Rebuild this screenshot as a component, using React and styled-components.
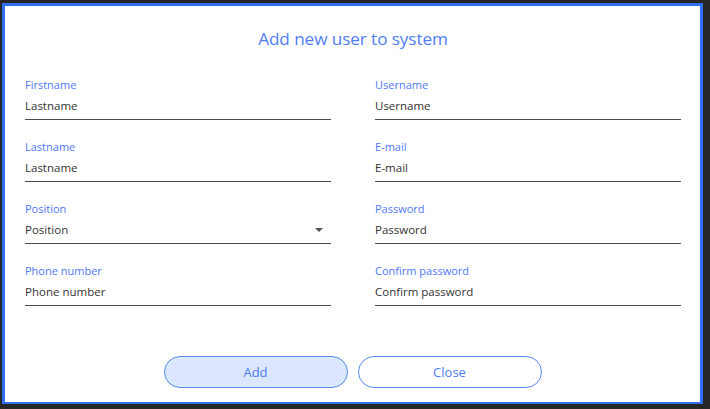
import React from "react";
import styled, { createGlobalStyle } from "styled-components";

const Global = createGlobalStyle`
  html, body { margin: 0; padding: 0; background: #262626; }
  body { width: 710px; height: 409px; overflow: hidden; font-family: "Open Sans", "Noto Sans", sans-serif; }
  * { box-sizing: border-box; }
`;

const Frame = styled.div`
  padding: 3px 7px 5px 2px;
  width: 710px;
  height: 409px;
`;

const Dialog = styled.div`
  width: 701px;
  height: 401px;
  background: #fff;
  border: 3px solid #2f6ff0;
  border-bottom-width: 2px;
  display: flex;
  flex-direction: column;
  padding: 0 19px 0 20px;
`;

const Title = styled.h1`
  margin: 0;
  padding-top: 21px;
  height: 72px;
  text-align: center;
  font-weight: 400;
  font-size: 17.2px;
  color: #4f7ef4;
  letter-spacing: -0.1px;
`;

const Grid = styled.div`
  display: grid;
  grid-template-columns: 306px 306px;
  column-gap: 44px;
  row-gap: 20px;
`;

const Field = styled.div`
  display: flex;
  flex-direction: column;
  height: 42px;
  border-bottom: 1px solid #4a4a4a;
  position: relative;
`;

const Label = styled.label`
  font-size: 11px;
  line-height: 14px;
  color: #4f77fa;
  height: 14px;
`;

const Value = styled.div`
  margin-top: 6px;
  font-size: 11.5px;
  line-height: 16px;
  color: #333;
`;

const Arrow = styled.span`
  position: absolute;
  right: 8px;
  bottom: 11px;
  width: 0;
  height: 0;
  border-left: 4px solid transparent;
  border-right: 4px solid transparent;
  border-top: 4px solid #555;
`;

const Buttons = styled.div`
  margin-top: auto;
  margin-bottom: 14px;
  display: flex;
  justify-content: center;
  gap: 10px;
  padding-right: 1px;
`;

const Button = styled.button`
  width: 184px;
  height: 32px;
  border-radius: 16px;
  border: 1px solid #5a88f3;
  background: ${(p) => (p.$primary ? "#dce6fc" : "#fff")};
  color: #4f7ef4;
  font-family: "Open Sans", "Noto Sans", sans-serif;
  font-size: 13px;
  cursor: pointer;
`;

const fields = [
  ["Firstname", "Lastname"],
  ["Username", "Username"],
  ["Lastname", "Lastname"],
  ["E-mail", "E-mail"],
  ["Position", "Position", true],
  ["Password", "Password"],
  ["Phone number", "Phone number"],
  ["Confirm password", "Confirm password"],
];

export default function App() {
  return (
    <>
      <Global />
      <Frame>
        <Dialog>
          <Title>Add new user to system</Title>
          <Grid>
            {fields.map(([label, value, select]) => (
              <Field key={label}>
                <Label>{label}</Label>
                <Value>{value}</Value>
                {select && <Arrow />}
              </Field>
            ))}
          </Grid>
          <Buttons>
            <Button $primary>Add</Button>
            <Button>Close</Button>
          </Buttons>
        </Dialog>
      </Frame>
    </>
  );
}
